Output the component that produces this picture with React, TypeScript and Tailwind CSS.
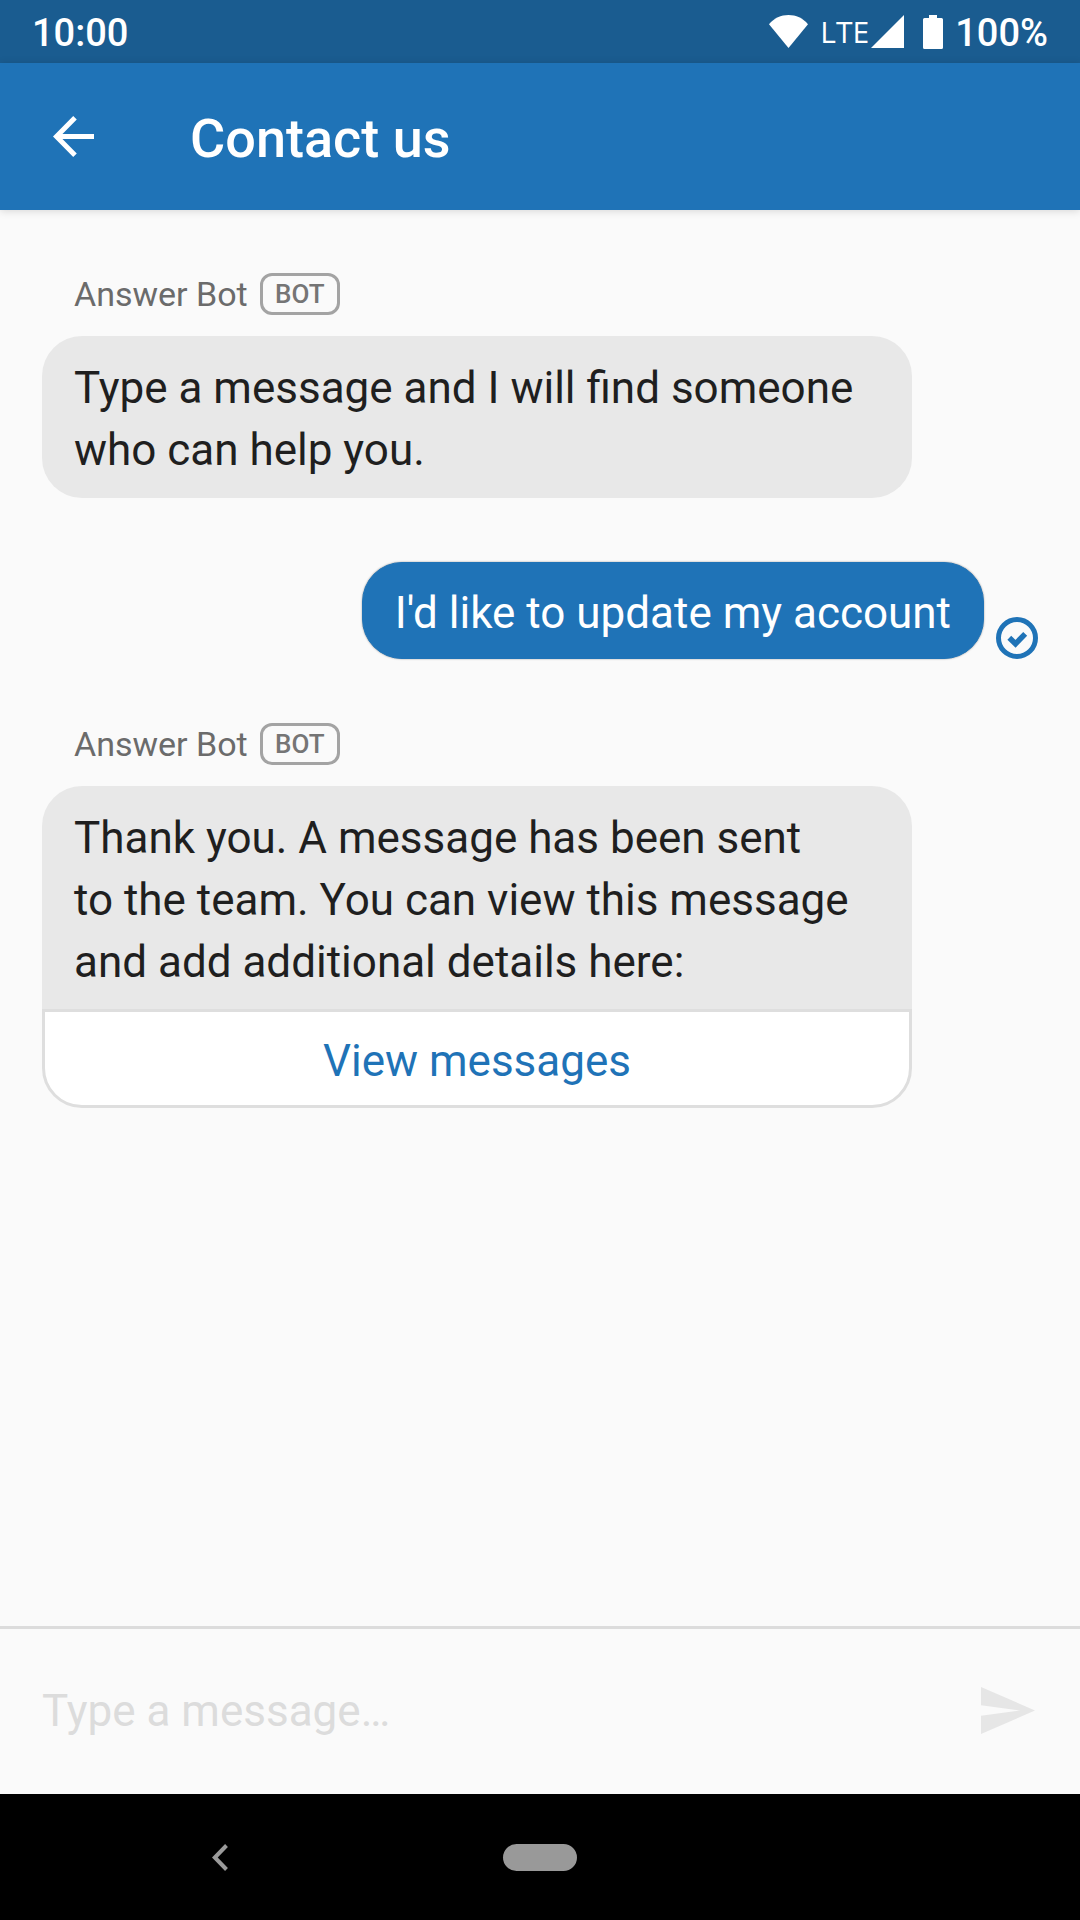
import type { ReactNode } from "react";

function StatusBar() {
  return (
    <div className="flex h-[63px] items-center justify-between bg-[#1a5c90] px-8 text-[38px] leading-none font-medium text-white">
      <span className="pt-0.5">10:00</span>
      <div className="flex items-center">
        <svg viewBox="0 0 39 33" className="mr-3 h-[33px] w-[39px]" fill="currentColor" aria-hidden="true">
          <path d="M0 9.3C5.2 3 12 0 19.500 0S33.800 3 39 9.300L19.500 33Z" />
        </svg>
        <span className="font-['Open_Sans'] text-[30px] font-normal">LTE</span>
        <svg viewBox="0 0 33 33" className="ml-0.5 h-[33px] w-[33px]" fill="currentColor" aria-hidden="true">
          <path d="M33 0V33H0Z" />
        </svg>
        <svg viewBox="0 0 20 34" className="mr-3 ml-[19px] h-[34px] w-5" fill="currentColor" aria-hidden="true">
          <path d="M6 0h8v3h4.500Q20 3 20 4.500v28q0 1.500-1.500 1.500h-17Q0 34 0 32.500v-28Q0 3 1.500 3H6Z" />
        </svg>
        <span className="pt-0.5">100%</span>
      </div>
    </div>
  );
}

function AppBar() {
  return (
    <header className="z-10 flex h-[147px] items-center gap-24 bg-[#1f73b7] pl-[53px] text-white shadow-[0_1px_8px_rgba(0,0,0,0.15)]">
      <button type="button" aria-label="Back" className="block">
        <svg viewBox="0 0 41 41" className="h-[41px] w-[41px]" fill="none" stroke="currentColor" strokeWidth="5" aria-hidden="true">
          <path d="M41 20.500H4M22 1.800L3.500 20.500 22 39.200" />
        </svg>
      </button>
      <h1 className="pt-1 text-[54px] leading-[62px] font-medium">Contact us</h1>
    </header>
  );
}

function BotLabel() {
  return (
    <div className="mb-[21px] flex items-center gap-3 pl-8 text-[34px] leading-[42px] text-[#6b6b6b]">
      <span>Answer Bot</span>
      <span className="flex h-[42px] w-20 items-center justify-center rounded-xl border-3 border-[#a3a3a3] text-[26px] leading-none font-medium text-[#757575]">
        BOT
      </span>
    </div>
  );
}

function BotMessage({ children, action }: { children: ReactNode; action?: string }) {
  return (
    <article className="w-full max-w-[870px]">
      <BotLabel />
      <p className={`bg-[#e8e8e8] px-8 pt-[21px] text-[#1f1f1f] ${action ? "rounded-t-[40px] pb-4" : "rounded-[40px] pb-[17px]"}`}>
        {children}
      </p>
      {action && (
        <button
          type="button"
          className="block w-full rounded-b-[40px] border-3 border-[#dedede] bg-white pt-[18px] pb-[13px] text-center text-[#1f73b7]"
        >
          {action}
        </button>
      )}
    </article>
  );
}

function UserMessage({ children }: { children: ReactNode }) {
  return (
    <article className="flex items-end justify-end gap-3">
      <p className="rounded-[40px] border border-[#1f73b7] bg-[#1f73b7] px-8 pt-[19px] pb-[14px] text-white shadow-[0_0_2px_rgba(0,0,0,0.4)]">
        {children}
      </p>
      <svg viewBox="0 0 42 42" className="h-[42px] w-[42px]" fill="none" stroke="#1f73b7" strokeWidth="5" role="img" aria-label="Delivered">
        <circle cx="21" cy="21" r="18.500" />
        <path d="M13.300 20.800l6.200 6L29.200 16.800" strokeWidth="5.500" />
      </svg>
    </article>
  );
}

function Composer() {
  return (
    <form className="flex h-[168px] items-center justify-between border-t-3 border-[#dcdcdc] pr-[45px] pb-0.5 pl-[42px]" onSubmit={(e) => e.preventDefault()}>
      <input
        type="text"
        aria-label="Type a message"
        placeholder="Type a message…"
        className="min-w-0 flex-1 bg-transparent text-[#1f1f1f] outline-none placeholder:text-[#dcdcdc]"
      />
      <button type="submit" aria-label="Send" className="block">
        <svg viewBox="0 0 54 47" className="h-[47px] w-[54px]" fill="#e6e6e6" aria-hidden="true">
          <path d="M0 0L54 23.500 0 47V28.800L39 23.500 0 18.200Z" />
        </svg>
      </button>
    </form>
  );
}

function NavigationBar() {
  return (
    <nav className="grid h-[126px] grid-cols-[440px_1fr_440px] items-center bg-black">
      <button type="button" aria-label="System back" className="block justify-self-center">
        <svg viewBox="0 0 16 27" className="h-[27px] w-4" fill="none" stroke="#9a9a9a" strokeWidth="4" aria-hidden="true">
          <path d="M14.500 1.500L2.800 13.500 14.500 25.500" />
        </svg>
      </button>
      <button type="button" aria-label="Home" className="block h-[27px] w-[74px] justify-self-center rounded-full bg-[#999999]" />
    </nav>
  );
}

export default function App() {
  return (
    <div className="flex min-h-screen flex-col bg-[#fafafa] font-['Roboto',sans-serif] text-[44px] leading-[62px]">
      <StatusBar />
      <AppBar />
      <main className="flex flex-1 flex-col gap-[64px] px-[42px] pt-[63px]">
        <BotMessage>
          Type a message and I will find someone
          <br />
          who can help you.
        </BotMessage>
        <UserMessage>I'd like to update my account</UserMessage>
        <BotMessage action="View messages">
          Thank you. A message has been sent
          <br />
          to the team. You can view this message
          <br />
          and add additional details here:
        </BotMessage>
      </main>
      <Composer />
      <NavigationBar />
    </div>
  );
}
